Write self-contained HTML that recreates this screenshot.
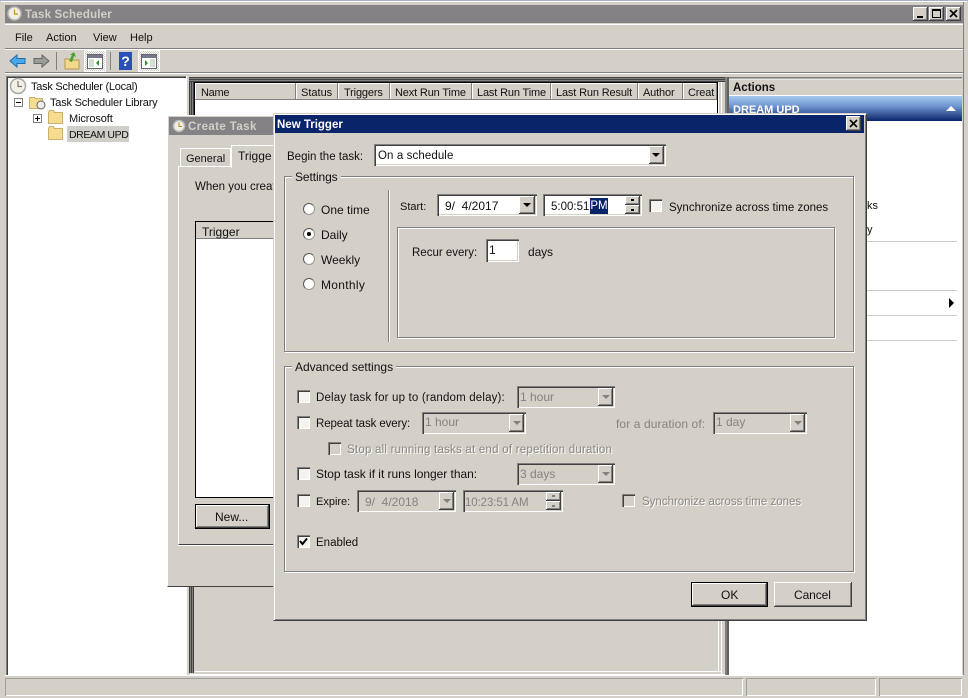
<!DOCTYPE html>
<html><head><meta charset="utf-8"><style>
html,body{margin:0;padding:0;width:968px;height:698px;overflow:hidden;background:#d4d0c8}
body{position:relative;font:12px/14px "Liberation Sans",sans-serif;color:#111}
div,span,svg{position:absolute;box-sizing:border-box}
.t{white-space:nowrap}
.f11{font-size:11px;margin-top:1px}
.f115{font-size:11.5px;margin-top:1px}
.g{color:#8a8884;text-shadow:1px 1px 0 #fff}
.d{color:#858380}
.b{font-weight:bold}
.s{box-shadow:inset 1px 1px #808080,inset 2px 2px #404040,inset -1px -1px #fff,inset -2px -2px #d4d0c8;background:#fff}
.sd{box-shadow:inset 1px 1px #808080,inset 2px 2px #404040,inset -1px -1px #fff,inset -2px -2px #d4d0c8;background:#d4d0c8}
.r{box-shadow:inset -1px -1px #404040,inset 1px 1px #fff,inset -2px -2px #808080;background:#d4d0c8}
.cb{width:13px;height:13px;box-shadow:inset 1px 1px #808080,inset 2px 2px #404040,inset -1px -1px #fff;background:#f4f3f0}
.cbd{width:13px;height:13px;box-shadow:inset 1px 1px #808080,inset 2px 2px #404040,inset -1px -1px #fff;background:#d4d0c8}
.rd{width:12px;height:12px;border-radius:50%;background:#fff;border:1px solid #9a9890;border-top-color:#555;border-left-color:#555}
.tri{width:0;height:0;border-left:4px solid transparent;border-right:4px solid transparent;border-top:4px solid #000}
.trid{width:0;height:0;border-left:4px solid transparent;border-right:4px solid transparent;border-top:4px solid #808080}
.grp{border:1px solid #808080;box-shadow:1px 1px #fff,inset 1px 1px #fff}
.lg{background:#d4d0c8;padding:0 3px}
.tb{background:repeating-conic-gradient(#fff 0 25%,#d4d0c8 0 50%) 0 0/2px 2px;border:1px solid #fff}
.hd{top:83px;height:17px;box-shadow:inset -1px -1px #808080,inset 1px 1px #fff;background:#d4d0c8;padding:3px 0 0 6px;white-space:nowrap;overflow:hidden;font-size:11px;letter-spacing:-.15px}
</style></head><body>

<!-- outer window -->
<div style="left:0;top:0;width:968px;height:1px;background:#a8b4c4"></div>
<div style="left:1px;top:1px;width:966px;height:1px;background:#fff"></div>
<div style="left:5px;top:5px;width:958px;height:18px;background:#848284"></div>
<div style="left:963px;top:2px;width:1px;height:694px;background:#808080"></div>
<div style="left:5px;top:24px;width:958px;height:1px;background:#fff"></div>
<svg style="left:7px;top:6px" width="15" height="15" viewBox="0 0 15 15"><circle cx="7.500" cy="7.500" r="6.500" fill="#f2eee0" stroke="#b8b8b8" stroke-width="1.500"/><path d="M7.500 3.500v4.500h3.500" fill="none" stroke="#c09020" stroke-width="1.200"/></svg>
<div class="t b f115" style="left:25px;top:7px;color:#d4d0c8;letter-spacing:.2px">Task Scheduler</div>
<div class="r" style="left:913px;top:7px;width:15px;height:14px"></div><div style="left:917px;top:16px;width:6px;height:2px;background:#000"></div>
<div class="r" style="left:929px;top:7px;width:15px;height:14px"></div><div style="left:932px;top:9px;width:9px;height:9px;border:1px solid #000;border-top-width:2px"></div>
<div class="r" style="left:946px;top:7px;width:15px;height:14px"></div>
<svg style="left:949px;top:9px" width="9" height="9" viewBox="0 0 9 9"><path d="M1 1l7 7M8 1l-7 7" stroke="#000" stroke-width="1.600"/></svg>

<!-- menu -->
<div class="t f11" style="left:15px;top:30px">File</div>
<div class="t f11" style="left:46px;top:30px">Action</div>
<div class="t f11" style="left:93px;top:30px">View</div>
<div class="t f11" style="left:130px;top:30px">Help</div>
<div style="left:5px;top:48px;width:958px;height:1px;background:#808080"></div>
<div style="left:5px;top:49px;width:958px;height:1px;background:#fff"></div>
<div style="left:5px;top:72px;width:958px;height:1px;background:#808080"></div>
<div style="left:5px;top:73px;width:958px;height:1px;background:#fff"></div>

<!-- toolbar -->
<svg style="left:9px;top:52px" width="18" height="18" viewBox="0 0 18 18"><path d="M1 9l7-6v3.500h8v5H8v3.500z" fill="#4aa8e8" stroke="#1c6cb0"/></svg>
<svg style="left:32px;top:52px" width="18" height="18" viewBox="0 0 18 18"><path d="M17 9l-7-6v3.500H2v5h8v3.500z" fill="#9c9c98" stroke="#666"/></svg>
<div style="left:56px;top:52px;width:1px;height:18px;background:#808080"></div>
<svg style="left:64px;top:52px" width="16" height="18" viewBox="0 0 16 18"><path d="M1 7h5l1 1h8v9H1z" fill="#f2d98c" stroke="#b09850"/><path d="M5 9l3-6-2 0 4-3 2 5-2-1-2 6z" fill="#48a030"/></svg>
<div class="tb" style="left:84px;top:50px;width:22px;height:22px"></div>
<svg style="left:87px;top:54px" width="16" height="15" viewBox="0 0 16 15"><rect x=".5" y=".5" width="15" height="14" fill="#fff" stroke="#667"/><rect x="1" y="1" width="14" height="3" fill="#778"/><rect x="2" y="5" width="5" height="8" fill="#cfe0cf"/><path d="M12 6l-3 3 3 3z" fill="#309030"/></svg>
<div style="left:110px;top:52px;width:1px;height:18px;background:#808080"></div>
<div class="t b" style="left:119px;top:52px;width:13px;height:18px;background:#2a50b8;color:#fff;text-align:center;font-size:14px;line-height:18px">?</div>
<div class="tb" style="left:138px;top:50px;width:22px;height:22px"></div>
<svg style="left:141px;top:54px" width="16" height="15" viewBox="0 0 16 15"><rect x=".5" y=".5" width="15" height="14" fill="#fff" stroke="#667"/><rect x="1" y="1" width="14" height="3" fill="#778"/><rect x="9" y="5" width="5" height="8" fill="#cfe0cf"/><path d="M4 6l3 3-3 3z" fill="#309030"/></svg>

<!-- left tree -->
<div style="left:6px;top:76px;width:180px;height:600px;background:#fff;box-shadow:inset 1px 1px #808080,inset 2px 2px #404040"></div>
<div style="left:186px;top:76px;width:1px;height:600px;background:#fff"></div>
<svg style="left:9px;top:77px" width="18" height="18" viewBox="0 0 18 18"><circle cx="9" cy="9" r="7.500" fill="#f4f0e4" stroke="#a8a8a8" stroke-width="1.500"/><path d="M9 4v5.500h4" fill="none" stroke="#777" stroke-width="1.200"/></svg>
<div class="t f11" style="left:31px;top:79px;letter-spacing:-.25px">Task Scheduler (Local)</div>
<div style="left:14px;top:98px;width:9px;height:9px;border:1px solid #808080;background:#fff"></div><div style="left:16px;top:102px;width:5px;height:1px;background:#000"></div>
<svg style="left:29px;top:94px" width="17" height="16" viewBox="0 0 17 16"><path d="M.5 3.500h5l1 1h7v10H.5z" fill="#f4dc90" stroke="#c8b070"/><circle cx="12" cy="11" r="4" fill="#eee" stroke="#666"/></svg>
<div class="t f11" style="left:50px;top:95px;letter-spacing:-.2px">Task Scheduler Library</div>
<div style="left:33px;top:114px;width:9px;height:9px;border:1px solid #808080;background:#fff"></div><div style="left:35px;top:118px;width:5px;height:1px;background:#000"></div><div style="left:37px;top:116px;width:1px;height:5px;background:#000"></div>
<svg style="left:48px;top:110px" width="15" height="14" viewBox="0 0 15 14"><path d="M.5 2.500l1-2h4l1 2h8v11H.5z" fill="#f6dc8c" stroke="#c8b070"/></svg>
<div class="t f11" style="left:69px;top:111px;letter-spacing:-.1px">Microsoft</div>
<svg style="left:48px;top:126px" width="15" height="14" viewBox="0 0 15 14"><path d="M.5 2.500l1-2h4l1 2h8v11H.5z" fill="#f6dc8c" stroke="#c8b070"/></svg>
<div style="left:67px;top:126px;width:62px;height:16px;background:#d0cec8"></div>
<div class="t" style="left:69px;top:127px;font-size:10.5px;letter-spacing:-.4px;margin-top:1px">DREAM UPD</div>

<!-- center pane -->
<div style="left:189px;top:77px;width:537px;height:598px;background:#d4d0c8"></div>
<div style="left:189px;top:77px;width:5px;height:596px;background:repeating-linear-gradient(90deg,#404040 0 1px,#808080 1px 2px)"></div>
<div style="left:189px;top:77px;width:536px;height:5px;background:repeating-linear-gradient(180deg,#404040 0 1px,#808080 1px 2px)"></div>
<div style="left:194px;top:82px;width:524px;height:40px;background:#fff;border:1px solid #000;border-width:1px 1px 0 1px"></div>
<div class="hd" style="left:195px;width:101px;letter-spacing:-.3px">Name</div>
<div class="hd" style="left:296px;width:42px;padding-left:5px;letter-spacing:0">Status</div>
<div class="hd" style="left:338px;width:52px">Triggers</div>
<div class="hd" style="left:390px;width:82px;padding-left:5px">Next Run Time</div>
<div class="hd" style="left:472px;width:79px;padding-left:5px">Last Run Time</div>
<div class="hd" style="left:551px;width:87px;padding-left:5px">Last Run Result</div>
<div class="hd" style="left:638px;width:45px;padding-left:5px">Author</div>
<div class="hd" style="left:683px;width:34px;padding-left:5px">Creat</div>
<div style="left:718px;top:82px;width:1px;height:589px;background:#fff"></div>
<div style="left:721px;top:82px;width:1px;height:592px;background:#fff"></div>
<div style="left:195px;top:671px;width:526px;height:1px;background:#fff"></div>
<div style="left:190px;top:674px;width:535px;height:1px;background:#fff"></div>
<div style="left:725px;top:77px;width:2px;height:598px;background:#808080"></div>

<!-- actions pane -->
<div style="left:727px;top:77px;width:236px;height:598px;background:#fff"></div>
<div style="left:727px;top:77px;width:236px;height:3px;background:linear-gradient(#606060,#fff)"></div>
<div style="left:727px;top:77px;width:2px;height:598px;background:#606060"></div>
<div style="left:729px;top:80px;width:233px;height:15px;background:#d4d0c8"></div>
<div class="t b f115" style="left:733px;top:80px">Actions</div>
<div style="left:729px;top:96px;width:233px;height:25px;background:linear-gradient(#a6caf0,#7096d0 40%,#0a246a)"></div>
<div class="t b f11" style="left:733px;top:102px;color:#fff">DREAM UPD</div>
<div style="left:946px;top:106px;width:0;height:0;border-left:5px solid transparent;border-right:5px solid transparent;border-bottom:5px solid #fff"></div>
<div class="t f11" style="left:867px;top:198px">ks</div>
<div class="t f11" style="left:867px;top:222px">y</div>
<div style="left:867px;top:241px;width:90px;height:1px;background:#ccc"></div>
<div style="left:867px;top:290px;width:90px;height:1px;background:#ccc"></div>
<div style="left:867px;top:315px;width:90px;height:1px;background:#ccc"></div>
<div style="left:867px;top:340px;width:90px;height:1px;background:#ccc"></div>
<div style="left:949px;top:298px;width:0;height:0;border-top:5px solid transparent;border-bottom:5px solid transparent;border-left:5px solid #000"></div>
<div style="left:962px;top:76px;width:1px;height:600px;background:#d4d0c8"></div>

<!-- status bar -->
<div style="left:0;top:675px;width:968px;height:23px;background:#d4d0c8"></div>
<div style="left:5px;top:675px;width:958px;height:1px;background:#fff"></div>
<div style="left:5px;top:678px;width:738px;height:18px;box-shadow:inset 1px 1px #a09e98,inset -1px -1px #fff"></div>
<div style="left:746px;top:678px;width:130px;height:18px;box-shadow:inset 1px 1px #a09e98,inset -1px -1px #fff"></div>
<div style="left:879px;top:678px;width:83px;height:18px;box-shadow:inset 1px 1px #a09e98,inset -1px -1px #fff"></div>

<!-- Create Task dialog -->
<div style="left:167px;top:115px;width:110px;height:472px;background:#d4d0c8;border-left:1px solid #fff;border-top:1px solid #fff;border-bottom:1px solid #404040"></div>
<div style="left:169px;top:117px;width:104px;height:18px;background:#848284"></div>
<svg style="left:172px;top:119px" width="14" height="14" viewBox="0 0 14 14"><circle cx="7" cy="7" r="5.500" fill="#f2eee0" stroke="#bbb" stroke-width="1.500"/><path d="M7 3.500V7.500h3" fill="none" stroke="#b08820"/></svg>
<div class="t b f115" style="left:188px;top:119px;color:#d4d0c8;letter-spacing:.4px">Create Task</div>
<div style="left:178px;top:166px;width:95px;height:379px;border-left:1px solid #fff;border-top:1px solid #fff;border-bottom:1px solid #404040;box-shadow:0 1px #fff"></div>
<div style="left:180px;top:148px;width:51px;height:19px;background:#d4d0c8;border:1px solid #fff"></div>
<div class="t f11" style="left:186px;top:151px">General</div>
<div style="left:231px;top:145px;width:44px;height:23px;background:#d4d0c8;border-top:1px solid #fff;border-left:1px solid #fff"></div>
<div class="t" style="left:238px;top:149px;width:34px;overflow:hidden">Trigger</div>
<div class="t f115" style="left:195px;top:179px;width:78px;overflow:hidden">When you create</div>
<div style="left:195px;top:221px;width:78px;height:277px;background:#fff;border:1px solid #000;border-right:0"></div>
<div style="left:196px;top:222px;width:77px;height:17px;background:#d4d0c8;box-shadow:inset 0 -1px #808080"></div>
<div class="t" style="left:202px;top:225px">Trigger</div>
<div style="left:195px;top:504px;width:75px;height:25px;border:1px solid #000;background:#d4d0c8;box-shadow:inset -1px -1px #404040,inset 1px 1px #fff,inset -2px -2px #808080"></div>
<div class="t" style="left:215px;top:510px">New...</div>

<!-- New Trigger dialog -->
<div style="left:273px;top:113px;width:594px;height:508px;background:#d4d0c8;border:1px solid #404040;border-top-color:#d4d0c8;border-left-color:#d4d0c8;box-shadow:inset 1px 1px #fff,inset -1px -1px #808080"></div>
<div style="left:275px;top:115px;width:589px;height:18px;background:#0a246a"></div>
<div class="t b f115" style="left:277px;top:117px;color:#fff">New Trigger</div>
<div class="r" style="left:846px;top:116px;width:15px;height:15px"></div>
<svg style="left:849px;top:119px" width="9" height="9" viewBox="0 0 9 9"><path d="M1 1l7 7M8 1l-7 7" stroke="#000" stroke-width="1.600"/></svg>

<div class="t f115" style="left:287px;top:149px">Begin the task:</div>
<div class="s" style="left:374px;top:144px;width:292px;height:22px"></div>
<div class="t f115" style="left:378px;top:148px;letter-spacing:.1px">On a schedule</div>
<div class="r" style="left:649px;top:146px;width:15px;height:18px"></div><div class="tri" style="left:652px;top:153px"></div>

<div class="grp" style="left:284px;top:176px;width:570px;height:176px"></div>
<div class="t lg" style="left:292px;top:170px;letter-spacing:-.1px">Settings</div>
<div style="left:388px;top:190px;width:1px;height:152px;background:#808080"></div>
<div style="left:389px;top:190px;width:1px;height:152px;background:#fff"></div>

<div class="rd" style="left:303px;top:203px"></div><div class="t" style="left:321px;top:203px">One time</div>
<div class="rd" style="left:303px;top:228px"></div><div style="left:307px;top:232px;width:4px;height:4px;border-radius:50%;background:#000"></div><div class="t" style="left:321px;top:228px">Daily</div>
<div class="rd" style="left:303px;top:253px"></div><div class="t" style="left:321px;top:253px">Weekly</div>
<div class="rd" style="left:303px;top:278px"></div><div class="t" style="left:321px;top:278px;letter-spacing:.3px">Monthly</div>

<div class="t f11" style="left:400px;top:199px">Start:</div>
<div class="s" style="left:437px;top:194px;width:100px;height:22px"></div>
<div class="t" style="left:445px;top:199px">9/&nbsp;&nbsp;4/2017</div>
<div class="r" style="left:519px;top:196px;width:16px;height:18px"></div><div class="tri" style="left:523px;top:203px"></div>
<div class="s" style="left:543px;top:194px;width:99px;height:22px"></div>
<div class="t f115" style="left:551px;top:199px">5:00:51</div>
<div class="t f115" style="left:590px;top:197px;width:18px;height:16px;background:#0a246a;color:#fff;line-height:16px;text-align:center">PM</div>
<div class="r" style="left:625px;top:196px;width:15px;height:9px"></div><div style="left:631px;top:199px;width:3px;height:2px;background:#000"></div>
<div class="r" style="left:625px;top:205px;width:15px;height:9px"></div><div style="left:631px;top:209px;width:3px;height:2px;background:#000"></div>
<div class="cb" style="left:649px;top:199px"></div>
<div class="t f115" style="left:669px;top:200px">Synchronize across time zones</div>

<div class="grp" style="left:397px;top:227px;width:438px;height:111px"></div>
<div class="t f115" style="left:412px;top:245px">Recur every:</div>
<div class="s" style="left:486px;top:239px;width:33px;height:23px"></div>
<div class="t" style="left:489px;top:243px">1</div>
<div class="t" style="left:528px;top:245px;letter-spacing:-.1px">days</div>

<div class="grp" style="left:284px;top:366px;width:570px;height:206px"></div>
<div class="t lg" style="left:292px;top:360px">Advanced settings</div>

<div class="cb" style="left:297px;top:390px"></div>
<div class="t f115" style="left:316px;top:390px;letter-spacing:.17px">Delay task for up to (random delay):</div>
<div class="sd" style="left:517px;top:386px;width:98px;height:22px"></div>
<div class="t d" style="left:520px;top:390px">1 hour</div>
<div class="r" style="left:598px;top:388px;width:15px;height:18px"></div><div class="trid" style="left:602px;top:395px"></div>

<div class="cb" style="left:297px;top:416px"></div>
<div class="t f115" style="left:316px;top:416px;letter-spacing:-.1px">Repeat task every:</div>
<div class="sd" style="left:422px;top:412px;width:104px;height:22px"></div>
<div class="t d" style="left:425px;top:415px">1 hour</div>
<div class="r" style="left:509px;top:414px;width:15px;height:18px"></div><div class="trid" style="left:513px;top:421px"></div>

<div class="t" style="left:616px;top:417px;color:#858380;letter-spacing:.1px">for a duration of:</div>
<div class="sd" style="left:713px;top:412px;width:94px;height:22px"></div>
<div class="t d" style="left:716px;top:415px">1 day</div>
<div class="r" style="left:790px;top:414px;width:15px;height:18px"></div><div class="trid" style="left:794px;top:421px"></div>

<div class="cbd" style="left:328px;top:442px"></div>
<div class="t g f115" style="left:347px;top:442px;letter-spacing:.23px">Stop all running tasks at end of repetition duration</div>

<div class="cb" style="left:297px;top:467px"></div>
<div class="t" style="left:316px;top:467px;letter-spacing:-.03px">Stop task if it runs longer than:</div>
<div class="sd" style="left:517px;top:463px;width:98px;height:22px"></div>
<div class="t d" style="left:520px;top:467px">3 days</div>
<div class="r" style="left:598px;top:465px;width:15px;height:18px"></div><div class="trid" style="left:602px;top:472px"></div>

<div class="cb" style="left:297px;top:494px"></div>
<div class="t f11" style="left:316px;top:494px">Expire:</div>
<div class="sd" style="left:357px;top:490px;width:99px;height:22px"></div>
<div class="t d" style="left:365px;top:495px">9/&nbsp;&nbsp;4/2018</div>
<div class="r" style="left:439px;top:492px;width:15px;height:18px"></div><div class="trid" style="left:443px;top:499px"></div>
<div class="sd" style="left:463px;top:490px;width:100px;height:22px"></div>
<div class="t d f115" style="left:465px;top:495px;letter-spacing:-.1px">10:23:51 AM</div>
<div class="r" style="left:546px;top:492px;width:15px;height:9px"></div><div style="left:552px;top:495px;width:3px;height:2px;background:#808080"></div>
<div class="r" style="left:546px;top:501px;width:15px;height:9px"></div><div style="left:552px;top:505px;width:3px;height:2px;background:#808080"></div>
<div class="cbd" style="left:622px;top:494px"></div>
<div class="t g f115" style="left:642px;top:494px">Synchronize across time zones</div>

<div class="cb" style="left:297px;top:535px"></div>
<svg style="left:299px;top:537px" width="9" height="9" viewBox="0 0 9 9"><path d="M1 4l2.500 3L8 1.500" fill="none" stroke="#000" stroke-width="2"/></svg>
<div class="t f115" style="left:316px;top:535px">Enabled</div>

<div style="left:691px;top:582px;width:77px;height:25px;border:1px solid #000;background:#d4d0c8;box-shadow:inset -1px -1px #404040,inset 1px 1px #fff,inset -2px -2px #808080"></div>
<div class="t" style="left:721px;top:588px">OK</div>
<div class="r" style="left:774px;top:582px;width:78px;height:25px"></div>
<div class="t" style="left:794px;top:588px;letter-spacing:-.1px">Cancel</div>

</body></html>
